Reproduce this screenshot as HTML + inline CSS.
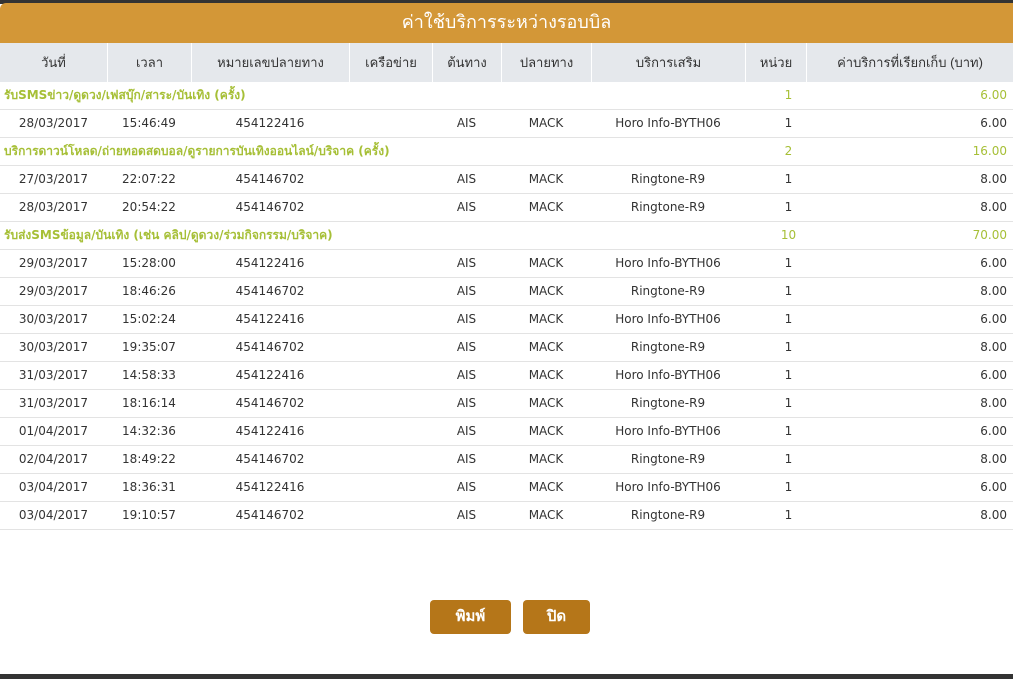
<!DOCTYPE html>
<html><head><meta charset="utf-8">
<style>
*{margin:0;padding:0;box-sizing:border-box}
body{width:1013px;height:679px;overflow:hidden;background:#fff;font-family:"DejaVu Sans","Liberation Sans",sans-serif;position:relative}
.top{position:absolute;left:0;top:0;width:1013px;height:4px;background:#333}
.title{position:absolute;left:0;top:3px;width:1013px;height:40px;background:#D39737;color:#fff;font-size:18px;text-align:center;line-height:38px;font-family:"Liberation Sans",sans-serif;border-radius:6px 0 0 0}
.hdr{position:absolute;left:0;top:43px;width:1013px;height:39px;background:#E5E8EC}
.hdr div{position:absolute;top:0;height:39px;line-height:39px;text-align:center;font-size:13px;color:#333;font-family:"Liberation Sans",sans-serif;border-left:1px solid #fff}
.row{position:absolute;left:0;width:1013px;height:28px;border-bottom:1px solid #E3E3E3}
.row div{position:absolute;top:0;height:27px;line-height:27px;font-size:12px;color:#333;text-align:center;white-space:nowrap}
.g div{color:#A6BF36}
.g .t{font-weight:bold;text-align:left;left:4px}
.btn{position:absolute;top:600px;height:34px;background:#B57619;color:#fff;font-weight:bold;font-size:15px;text-align:center;line-height:34px;border-radius:4px;font-family:"Liberation Sans",sans-serif}
.bot{position:absolute;left:0;top:674px;width:1013px;height:5px;background:#333}
</style></head><body>
<div class="top"></div>
<div class="title">ค่าใช้บริการระหว่างรอบบิล</div>
<div class="hdr">
<div style="left:0;width:107px;border:0">วันที่</div>
<div style="left:107px;width:84px">เวลา</div>
<div style="left:191px;width:158px">หมายเลขปลายทาง</div>
<div style="left:349px;width:83px">เครือข่าย</div>
<div style="left:432px;width:69px">ต้นทาง</div>
<div style="left:501px;width:90px">ปลายทาง</div>
<div style="left:591px;width:154px">บริการเสริม</div>
<div style="left:745px;width:61px">หน่วย</div>
<div style="left:806px;width:207px">ค่าบริการที่เรียกเก็บ (บาท)</div>
</div>
<div id="rows"></div>
<div class="btn" style="left:430px;width:81px">พิมพ์</div>
<div class="btn" style="left:523px;width:67px">ปิด</div>
<div class="bot"></div>
<div style="position:absolute;left:0;top:82px">
<div class="row g" style="top:0"><div class="t">รับSMSข่าว/ดูดวง/เฟสบุ๊ก/สาระ/บันเทิง (ครั้ง)</div><div style="left:745px;width:87px">1</div><div style="right:6px;text-align:right">6.00</div></div>
<div class="row" style="top:28px"><div style="left:0;width:107px">28/03/2017</div><div style="left:107px;width:84px">15:46:49</div><div style="left:191px;width:158px">454122416</div><div style="left:432px;width:69px">AIS</div><div style="left:501px;width:90px">MACK</div><div style="left:591px;width:154px">Horo Info-BYTH06</div><div style="left:745px;width:87px">1</div><div style="right:6px">6.00</div></div>
<div class="row g" style="top:56px"><div class="t">บริการดาวน์โหลด/ถ่ายทอดสดบอล/ดูรายการบันเทิงออนไลน์/บริจาค (ครั้ง)</div><div style="left:745px;width:87px">2</div><div style="right:6px">16.00</div></div>
<div class="row" style="top:84px"><div style="left:0;width:107px">27/03/2017</div><div style="left:107px;width:84px">22:07:22</div><div style="left:191px;width:158px">454146702</div><div style="left:432px;width:69px">AIS</div><div style="left:501px;width:90px">MACK</div><div style="left:591px;width:154px">Ringtone-R9</div><div style="left:745px;width:87px">1</div><div style="right:6px">8.00</div></div>
<div class="row" style="top:112px"><div style="left:0;width:107px">28/03/2017</div><div style="left:107px;width:84px">20:54:22</div><div style="left:191px;width:158px">454146702</div><div style="left:432px;width:69px">AIS</div><div style="left:501px;width:90px">MACK</div><div style="left:591px;width:154px">Ringtone-R9</div><div style="left:745px;width:87px">1</div><div style="right:6px">8.00</div></div>
<div class="row g" style="top:140px"><div class="t">รับส่งSMSข้อมูล/บันเทิง (เช่น คลิป/ดูดวง/ร่วมกิจกรรม/บริจาค)</div><div style="left:745px;width:87px">10</div><div style="right:6px">70.00</div></div>
<div class="row" style="top:168px"><div style="left:0;width:107px">29/03/2017</div><div style="left:107px;width:84px">15:28:00</div><div style="left:191px;width:158px">454122416</div><div style="left:432px;width:69px">AIS</div><div style="left:501px;width:90px">MACK</div><div style="left:591px;width:154px">Horo Info-BYTH06</div><div style="left:745px;width:87px">1</div><div style="right:6px">6.00</div></div>
<div class="row" style="top:196px"><div style="left:0;width:107px">29/03/2017</div><div style="left:107px;width:84px">18:46:26</div><div style="left:191px;width:158px">454146702</div><div style="left:432px;width:69px">AIS</div><div style="left:501px;width:90px">MACK</div><div style="left:591px;width:154px">Ringtone-R9</div><div style="left:745px;width:87px">1</div><div style="right:6px">8.00</div></div>
<div class="row" style="top:224px"><div style="left:0;width:107px">30/03/2017</div><div style="left:107px;width:84px">15:02:24</div><div style="left:191px;width:158px">454122416</div><div style="left:432px;width:69px">AIS</div><div style="left:501px;width:90px">MACK</div><div style="left:591px;width:154px">Horo Info-BYTH06</div><div style="left:745px;width:87px">1</div><div style="right:6px">6.00</div></div>
<div class="row" style="top:252px"><div style="left:0;width:107px">30/03/2017</div><div style="left:107px;width:84px">19:35:07</div><div style="left:191px;width:158px">454146702</div><div style="left:432px;width:69px">AIS</div><div style="left:501px;width:90px">MACK</div><div style="left:591px;width:154px">Ringtone-R9</div><div style="left:745px;width:87px">1</div><div style="right:6px">8.00</div></div>
<div class="row" style="top:280px"><div style="left:0;width:107px">31/03/2017</div><div style="left:107px;width:84px">14:58:33</div><div style="left:191px;width:158px">454122416</div><div style="left:432px;width:69px">AIS</div><div style="left:501px;width:90px">MACK</div><div style="left:591px;width:154px">Horo Info-BYTH06</div><div style="left:745px;width:87px">1</div><div style="right:6px">6.00</div></div>
<div class="row" style="top:308px"><div style="left:0;width:107px">31/03/2017</div><div style="left:107px;width:84px">18:16:14</div><div style="left:191px;width:158px">454146702</div><div style="left:432px;width:69px">AIS</div><div style="left:501px;width:90px">MACK</div><div style="left:591px;width:154px">Ringtone-R9</div><div style="left:745px;width:87px">1</div><div style="right:6px">8.00</div></div>
<div class="row" style="top:336px"><div style="left:0;width:107px">01/04/2017</div><div style="left:107px;width:84px">14:32:36</div><div style="left:191px;width:158px">454122416</div><div style="left:432px;width:69px">AIS</div><div style="left:501px;width:90px">MACK</div><div style="left:591px;width:154px">Horo Info-BYTH06</div><div style="left:745px;width:87px">1</div><div style="right:6px">6.00</div></div>
<div class="row" style="top:364px"><div style="left:0;width:107px">02/04/2017</div><div style="left:107px;width:84px">18:49:22</div><div style="left:191px;width:158px">454146702</div><div style="left:432px;width:69px">AIS</div><div style="left:501px;width:90px">MACK</div><div style="left:591px;width:154px">Ringtone-R9</div><div style="left:745px;width:87px">1</div><div style="right:6px">8.00</div></div>
<div class="row" style="top:392px"><div style="left:0;width:107px">03/04/2017</div><div style="left:107px;width:84px">18:36:31</div><div style="left:191px;width:158px">454122416</div><div style="left:432px;width:69px">AIS</div><div style="left:501px;width:90px">MACK</div><div style="left:591px;width:154px">Horo Info-BYTH06</div><div style="left:745px;width:87px">1</div><div style="right:6px">6.00</div></div>
<div class="row" style="top:420px"><div style="left:0;width:107px">03/04/2017</div><div style="left:107px;width:84px">19:10:57</div><div style="left:191px;width:158px">454146702</div><div style="left:432px;width:69px">AIS</div><div style="left:501px;width:90px">MACK</div><div style="left:591px;width:154px">Ringtone-R9</div><div style="left:745px;width:87px">1</div><div style="right:6px">8.00</div></div>
</div>
</body></html>
